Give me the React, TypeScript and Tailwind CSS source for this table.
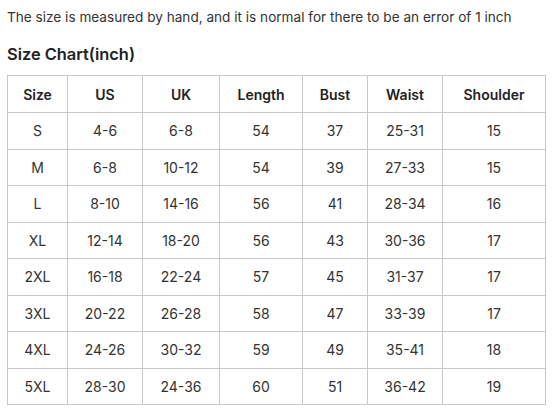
const cols = [60, 75, 77, 83, 65, 75, 103];
const head = ["Size", "US", "UK", "Length", "Bust", "Waist", "Shoulder"];
const rows = [
  ["S", "4-6", "6-8", "54", "37", "25-31", "15"],
  ["M", "6-8", "10-12", "54", "39", "27-33", "15"],
  ["L", "8-10", "14-16", "56", "41", "28-34", "16"],
  ["XL", "12-14", "18-20", "56", "43", "30-36", "17"],
  ["2XL", "16-18", "22-24", "57", "45", "31-37", "17"],
  ["3XL", "20-22", "26-28", "58", "47", "33-39", "17"],
  ["4XL", "24-26", "30-32", "59", "49", "35-41", "18"],
  ["5XL", "28-30", "24-36", "60", "51", "36-42", "19"],
];

export default function App() {
  return (
    <div className="w-[558px] h-[420px] bg-white px-[7px] pt-[7px] text-[#333] font-['Inter',sans-serif]">
      <p className="text-[13.6px] leading-[20px]">
        The size is measured by hand, and it is normal for there to be an error of 1 inch
      </p>
      <h2 className="mt-[16px] text-[16.4px] leading-[22px] font-semibold text-[#222]">Size Chart(inch)</h2>
      <table className="mt-[10px] border-collapse table-fixed w-[538px] text-[14px]">
        <colgroup>
          {cols.map((w, i) => (
            <col key={i} style={{ width: w }} />
          ))}
        </colgroup>
        <thead>
          <tr className="h-[37px]">
            {head.map((h) => (
              <th key={h} className="border border-[#c8c8c8] font-semibold text-[#222] text-center p-0">
                {h}
              </th>
            ))}
          </tr>
        </thead>
        <tbody>
          {rows.map((r) => (
            <tr key={r[0]} className="h-[36.5px]">
              {r.map((c, i) => (
                <td key={i} className="border border-[#c8c8c8] text-center p-0">
                  {c}
                </td>
              ))}
            </tr>
          ))}
        </tbody>
      </table>
    </div>
  );
}
